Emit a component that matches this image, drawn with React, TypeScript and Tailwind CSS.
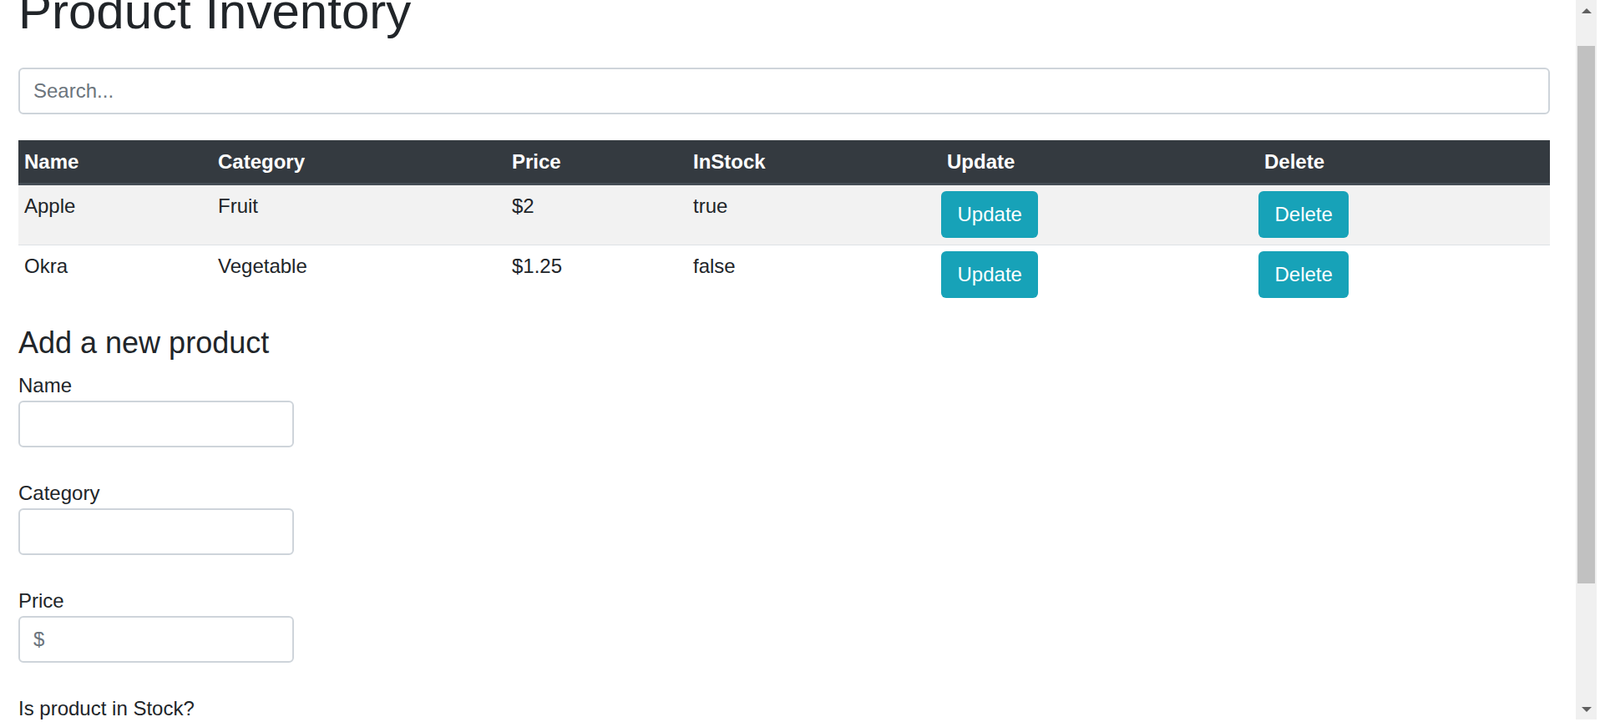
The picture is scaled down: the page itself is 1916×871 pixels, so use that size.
import React from "react";

type Product = {
  name: string;
  category: string;
  price: string;
  inStock: string;
};

const products: Product[] = [
  { name: "Apple", category: "Fruit", price: "$2", inStock: "true" },
  { name: "Okra", category: "Vegetable", price: "$1.25", inStock: "false" },
];

const ScrollArrow = ({ up }: { up?: boolean }) => (
  <div className="flex h-[25px] items-center justify-center">
    <svg width="12" height="6" viewBox="0 0 12 6">
      {up ? (
        <polygon points="0,6 6,0 12,6" fill="#606060" />
      ) : (
        <polygon points="0,0 12,0 6,6" fill="#606060" />
      )}
    </svg>
  </div>
);

const Field = ({ label, placeholder }: { label: string; placeholder?: string }) => (
  <div className="mb-[37px] flex flex-col">
    <label className="leading-[36px]">{label}</label>
    <input
      className="h-[56px] w-[330px] rounded-[6px] border-2 border-[#ced4da] bg-white pl-[16px] text-[24px] text-[#495057] outline-none placeholder:text-[#6c757d]"
      placeholder={placeholder}
    />
  </div>
);

const App = () => {
  return (
    <div className="flex h-[871px] w-[1916px] overflow-hidden bg-white font-['Liberation_Sans',Arial,sans-serif] text-[24px] text-[#212529]">
      {/* pagina */}
      <div className="w-[1887px] shrink-0 pl-[22px]">
        <div className="w-[1834px]">
          <h1 className="-mt-[22px] text-[60px] font-normal leading-[72px]">Product Inventory</h1>

          {/* busca */}
          <input
            className="mt-[31px] h-[56px] w-full rounded-[6px] border-2 border-[#ced4da] bg-white pl-[16px] text-[24px] outline-none placeholder:text-[#6c757d]"
            placeholder="Search..."
          />

          {/* tabela */}
          <table className="mt-[31px] w-[1834px] table-fixed border-collapse">
            <colgroup>
              <col className="w-[232px]" />
              <col className="w-[352px]" />
              <col className="w-[217px]" />
              <col className="w-[297px]" />
              <col className="w-[380px]" />
              <col className="w-[356px]" />
            </colgroup>
            <thead>
              <tr className="border-b-[3px] border-[#454d55] bg-[#343a40] text-left text-white">
                <th className="px-[7px] py-[7.5px] font-bold leading-[36px]">Name</th>
                <th className="px-[7px] py-[7.5px] font-bold leading-[36px]">Category</th>
                <th className="px-[7px] py-[7.5px] font-bold leading-[36px]">Price</th>
                <th className="px-[7px] py-[7.5px] font-bold leading-[36px]">InStock</th>
                <th className="py-[7.5px] pl-[14px] pr-[7px] font-bold leading-[36px]">Update</th>
                <th className="py-[7.5px] pl-[14px] pr-[7px] font-bold leading-[36px]">Delete</th>
              </tr>
            </thead>
            <tbody>
              {products.map((p, i) => (
                <tr
                  key={p.name}
                  className={i % 2 === 0 ? "bg-[#f2f2f2]" : "border-t border-[#dee2e6] bg-white"}
                >
                  <td className="px-[7px] pb-[8px] pt-[7px] align-top leading-[36px]">{p.name}</td>
                  <td className="px-[7px] pb-[8px] pt-[7px] align-top leading-[36px]">{p.category}</td>
                  <td className="px-[7px] pb-[8px] pt-[7px] align-top leading-[36px]">{p.price}</td>
                  <td className="px-[7px] pb-[8px] pt-[7px] align-top leading-[36px]">{p.inStock}</td>
                  <td className="px-[7px] pb-[8px] pt-[7px] align-top">
                    <button className="flex h-[56px] items-center rounded-[6px] bg-[#17a2b8] px-[19.5px] text-[24px] text-white">
                      Update
                    </button>
                  </td>
                  <td className="px-[7px] pb-[8px] pt-[7px] align-top">
                    <button className="flex h-[56px] items-center rounded-[6px] bg-[#17a2b8] px-[19.5px] text-[24px] text-white">
                      Delete
                    </button>
                  </td>
                </tr>
              ))}
            </tbody>
          </table>

          {/* novo produto */}
          <h4 className="mt-[24px] text-[36px] font-normal leading-[43px]">Add a new product</h4>
          <form className="mt-[12px]">
            <Field label="Name" />
            <Field label="Category" />
            <Field label="Price" placeholder="$" />
            <label className="leading-[36px]">Is product in Stock?</label>
          </form>
        </div>
      </div>

      {/* barra de rolagem */}
      <div className="flex h-[862px] w-[25px] shrink-0 flex-col bg-[#f0f0f0]">
        <ScrollArrow up />
        <div className="flex-1">
          <div className="mx-[2px] mt-[30px] h-[644px] bg-[#c1c1c1]" />
        </div>
        <ScrollArrow />
      </div>
    </div>
  );
};

export default App;
